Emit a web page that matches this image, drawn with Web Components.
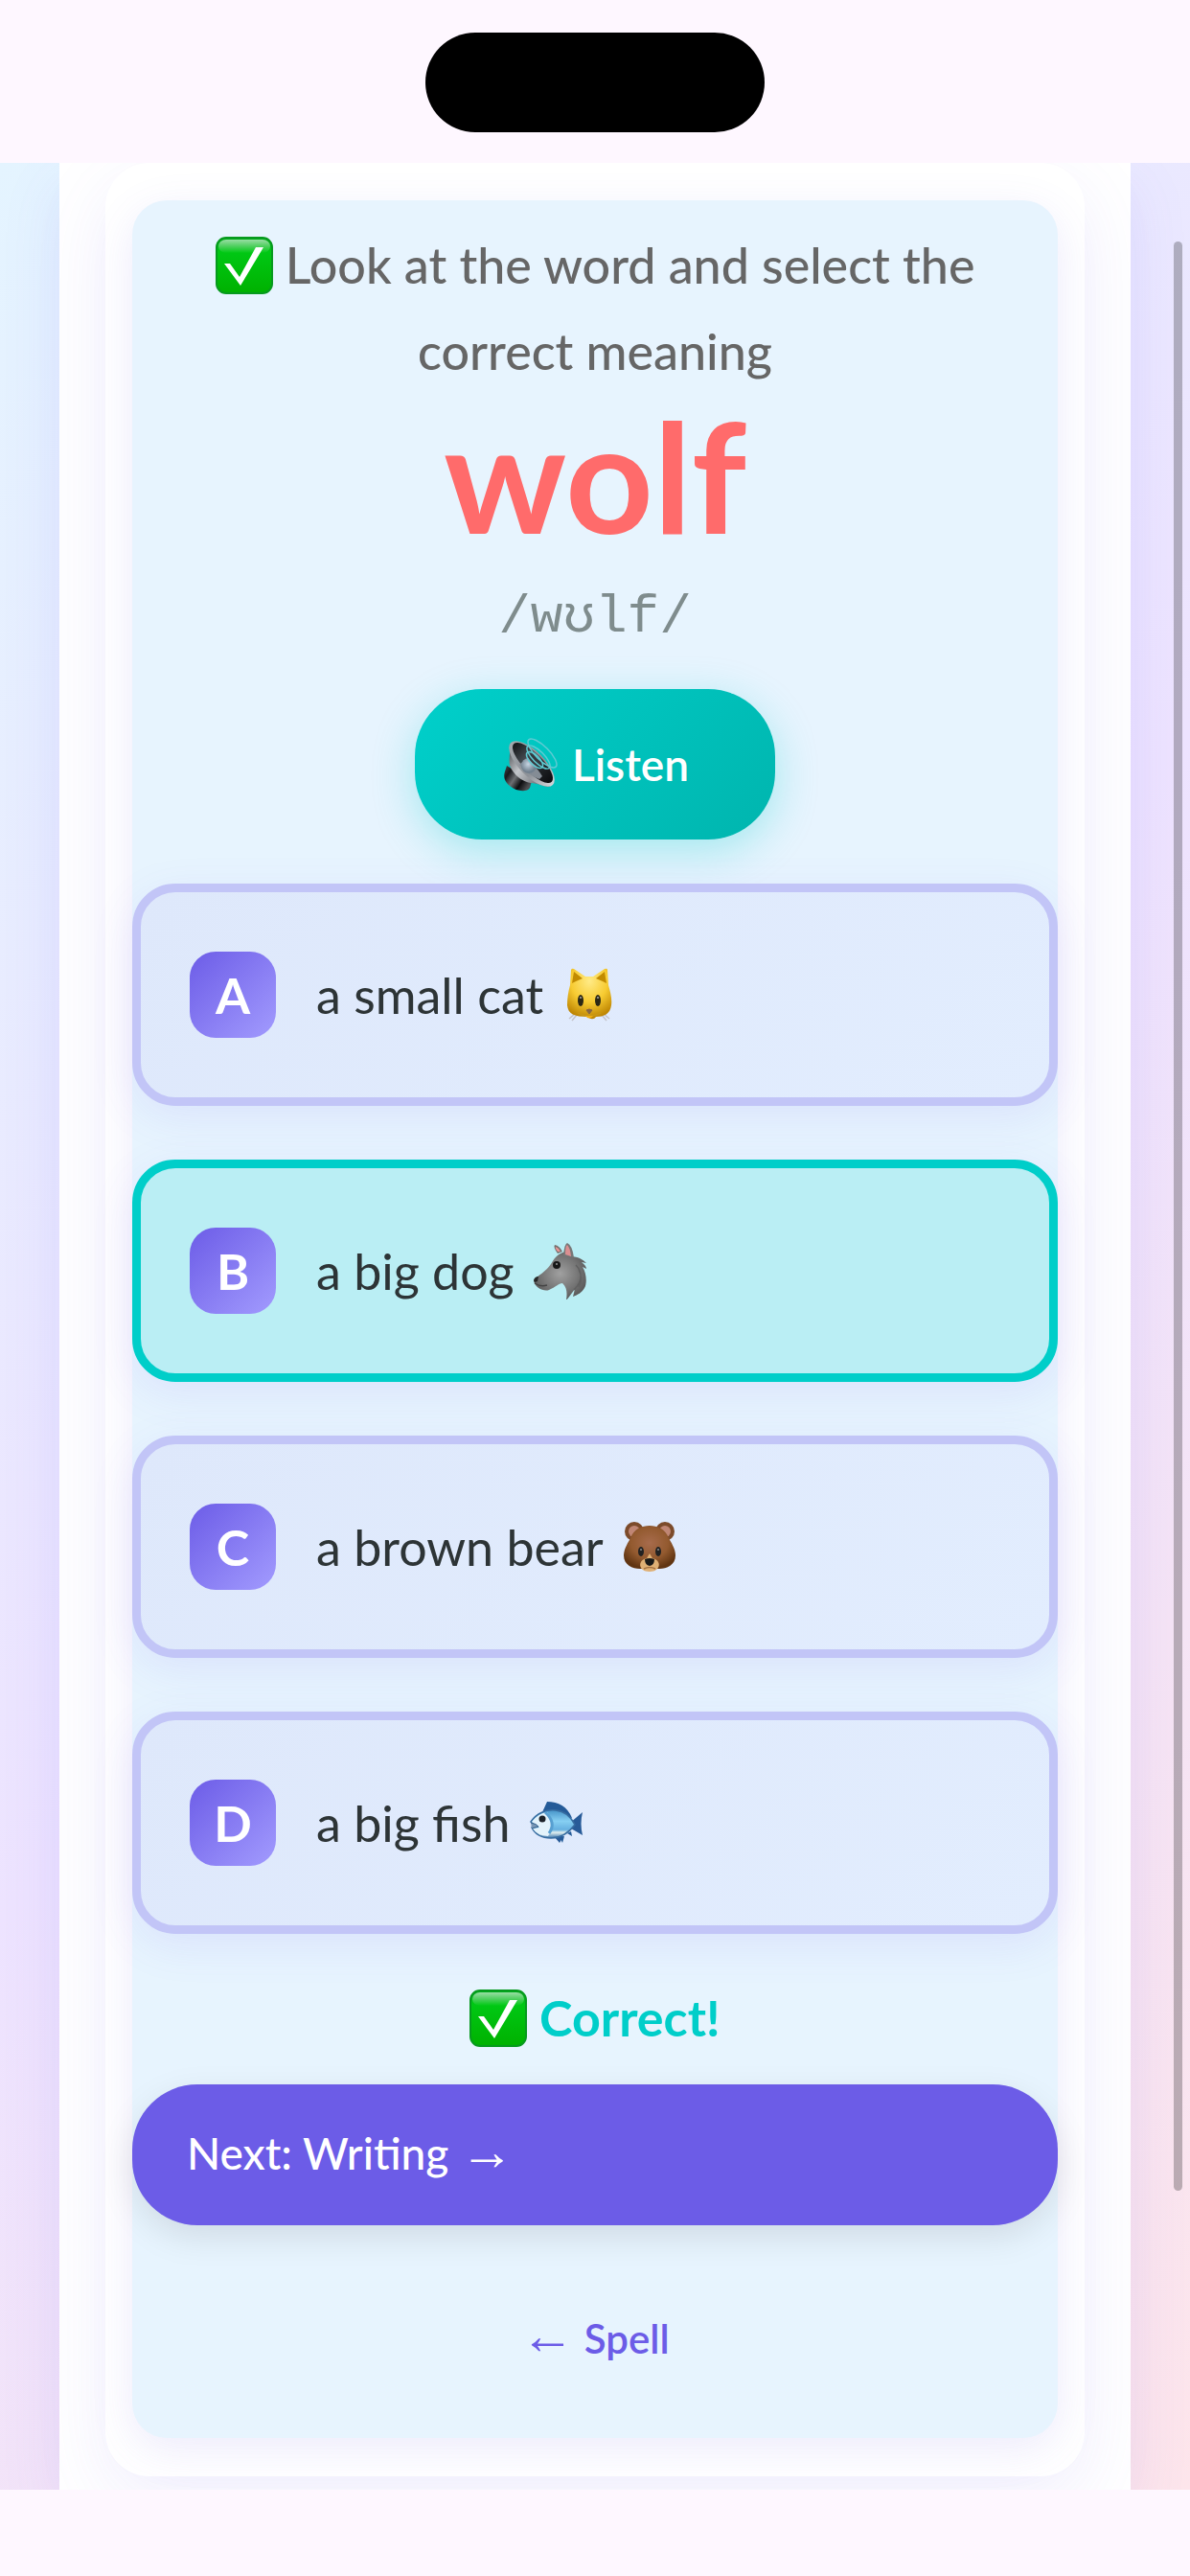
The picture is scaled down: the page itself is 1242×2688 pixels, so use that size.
<!DOCTYPE html>
<html lang="en">
<head>
<meta charset="utf-8">
<meta name="viewport" content="width=device-width, initial-scale=1">
<title>wolf</title>
<style>
  body {
    margin: 0;
    background: #fef7ff;
    font-family: Lato, "Liberation Sans", sans-serif;
    color: #2d3436;
  }

  /* long thin arrows */
  .arrow {
    font-family: "Liberation Serif", serif;
    font-size: 56px;
    font-weight: 400;
    line-height: 0;
  }
</style>
</head>
<body>
<app-screen>
  <lesson-card>
    <lesson-prompt>
      <emoji-icon slot="icon" name="check"></emoji-icon>
      Look at the word and select the correct meaning
    </lesson-prompt>
    <word-title ipa="/wʊlf/">wolf</word-title>
    <listen-button>Listen</listen-button>
    <answer-list>
      <answer-option letter="A" icon="cat">a small cat</answer-option>
      <answer-option letter="B" icon="wolf" selected>a big dog</answer-option>
      <answer-option letter="C" icon="bear">a brown bear</answer-option>
      <answer-option letter="D" icon="fish">a big fish</answer-option>
    </answer-list>
    <answer-feedback>Correct!</answer-feedback>
    <next-button>Next: Writing <span class="arrow">→</span></next-button>
    <back-link><span class="arrow">←</span> Spell</back-link>
  </lesson-card>
</app-screen>

<script>
  // Shared base: puts the markup into an open shadow root
  class BaseElement extends HTMLElement {
    constructor() {
      super();
      this.attachShadow({ mode: 'open' });
    }

    connectedCallback() {
      const template = document.createElement('template');
      template.innerHTML = this.render();
      this.shadowRoot.replaceChildren(template.content.cloneNode(true));
    }
  }

  const ICONS = {
    check: `
      <defs>
        <linearGradient id="g" x2="0" y2="1"><stop stop-color="#00a81c"/><stop offset=".25" stop-color="#00c814"/><stop offset="1" stop-color="#00b100"/></linearGradient>
        <linearGradient id="s" x2="0" y2="1"><stop stop-color="#fff" stop-opacity=".6"/><stop offset="1" stop-color="#fff" stop-opacity="0"/></linearGradient>
      </defs>
      <rect x="1" y="1" width="58" height="58" rx="10" fill="url(#g)" stroke="#079a1e" stroke-width="2"/>
      <rect x="3" y="3" width="54" height="14" rx="8" fill="url(#s)"/>
      <path d="M9 28h6l10 14L42 11h8L26 51z" fill="#fff"/>`,
    speaker: `
      <defs>
        <linearGradient id="m" x2="1" y2=".6"><stop stop-color="#4a4a4c"/><stop offset=".25" stop-color="#17191c"/><stop offset=".5" stop-color="#6d6f72"/><stop offset=".75" stop-color="#0c0d0f"/><stop offset="1" stop-color="#4d4d50"/></linearGradient>
        <linearGradient id="c" x2="1" y2=".6"><stop stop-color="#55585c"/><stop offset=".4" stop-color="#c3c6ca"/><stop offset="1" stop-color="#66696e"/></linearGradient>
        <linearGradient id="r" x2="1"><stop stop-color="#a3a8ad"/><stop offset=".6" stop-color="#8d9197"/><stop offset="1" stop-color="#d3d6da"/></linearGradient>
        <linearGradient id="k" x2="1"><stop stop-color="#131517"/><stop offset=".4" stop-color="#4d535a"/><stop offset=".65" stop-color="#23262a"/><stop offset="1" stop-color="#0b0c0e"/></linearGradient>
        <radialGradient id="d" cx=".45" cy=".4"><stop stop-color="#c6d5e3"/><stop offset="1" stop-color="#71808e"/></radialGradient>
      </defs>
      <path d="M6 31l26 16-2 7c-3 5-14 4-21-2-5-4-7-9-5-15z" fill="url(#m)"/>
      <path d="M9 16C9 24 7 29 11 35c5 8 13 13 20 14 7 0 14 4 20 4z" fill="url(#c)"/>
      <ellipse cx="32" cy="29" rx="31" ry="13" transform="rotate(45 32 29)" fill="url(#r)"/>
      <ellipse cx="0" cy="0" rx="28" ry="10" transform="translate(33 28) rotate(45)" fill="url(#k)"/>
      <path d="M19 30c4-6 14-5 24 12l-3 3c-8-3-16-8-21-15z" fill="#848c95"/>
      <circle cx="29" cy="31" r="8" fill="url(#d)"/>
      <ellipse cx="35" cy="25" rx="9" ry="4" transform="rotate(45 35 25)" fill="#34393f"/>
      <g fill="none" stroke="#5fcbd3" stroke-width="1.5">
        <ellipse cx="35" cy="25" rx="11" ry="5" transform="rotate(45 35 25)"/>
        <ellipse cx="39" cy="22" rx="16" ry="6" transform="rotate(45 39 22)"/>
        <ellipse cx="43" cy="18" rx="20" ry="7" transform="rotate(45 43 18)"/>
      </g>`,
    cat: `
      <defs>
        <radialGradient id="f" cy=".25" r=".75"><stop stop-color="#ffeb87"/><stop offset=".55" stop-color="#f7cb31"/><stop offset="1" stop-color="#bc8300"/></radialGradient>
      </defs>
      <path d="M9 55l6-5m-3 7l5-6M51 55l-6-5m3 7l-5-6" stroke="#c4c4cb" stroke-width="1.5"/>
      <path d="M10 20L11 4q1-2 3-1l12 8h8l12-8q3-1 3 1l1 16c2 7 4 14 3 21-1 9-8 12-16 12-2 3-6 3-8 0C14 53 8 50 7 41c0-7 1-14 3-21z" fill="url(#f)"/>
      <path d="M12 18l2-12 9 7-7 3zM48 18L46 6l-9 7 7 3z" fill="#c28b00"/>
      <ellipse cx="21" cy="36" rx="3" ry="6" fill="#2a2715"/><ellipse cx="39" cy="36" rx="3" ry="6" fill="#2a2715"/>
      <circle cx="21" cy="33" r="1" fill="#aaa"/><circle cx="39" cy="33" r="1" fill="#aaa"/>
      <path d="M27 46q3-2 6 0l-3 4z" fill="#866544" stroke="#866544"/>
      <path d="M18 49q9 4 12 2q4 2 12-2" fill="none" stroke="#c99715" stroke-width="1.5"/>
      <path d="M26 52h8q-4 5-8 0z" fill="#f0ad11"/>`,
    wolf: `
      <defs>
        <radialGradient id="w" cx=".5" cy=".45" r=".6"><stop stop-color="#a0a0a0"/><stop offset=".6" stop-color="#747474"/><stop offset="1" stop-color="#535353"/></radialGradient>
      </defs>
      <path d="M27 12q-5-7-3-9 5 1 8 7z" fill="#76706e"/><path d="M27 10q-3-4-2-5 3 1 5 5z" fill="#e99696"/>
      <path d="M2 40c4-5 13-9 18-17 5-9 10-12 16-13 2 1 4 2 6 5 8 1 12 4 15 7l-5-1q5 4 5 7l-4-2c4 6 5 17 2 22-3 5-7 7-12 9l2-8c-3 4-5 7-9 12 1-8 1-13-4-18-4 0-7 4-14 7-5 2-15-2-16-10z" fill="url(#w)"/>
      <path d="M33 14Q34 2 37 1q5 2 7 15z" fill="#777"/><path d="M35 13q0-9 2-10 3 3 4 12z" fill="#db8f91"/>
      <path d="M2 40q1-4 5-4l-1 5-3 1z" fill="#262626"/>
      <path d="M3 43q6 4 13 2" fill="none" stroke="#444" stroke-width="1.5"/>
      <circle cx="26" cy="24" r="4" fill="#171717"/><circle cx="26" cy="23" r="1" fill="#999"/>
      <path d="M46 24c8 8 6 18-2 26M49 29q5 9 0 18" fill="none" stroke="#606060" stroke-width="1.5"/>`,
    bear: `
      <defs>
        <radialGradient id="b" cy=".4" r=".6"><stop stop-color="#a76b4c"/><stop offset=".6" stop-color="#935a2f"/><stop offset="1" stop-color="#613512"/></radialGradient>
      </defs>
      <circle cx="14" cy="14" r="10" fill="#7c4b2b"/><circle cx="46" cy="14" r="10" fill="#7c4b2b"/>
      <circle cx="14" cy="14" r="6" fill="#c08674"/><circle cx="46" cy="14" r="6" fill="#c08674"/>
      <path d="M10 21C14 11 22 8 30 8s16 3 20 13c2 4 7 11 7 18 0 10-9 14-17 14H20C12 53 3 49 3 39c0-7 5-14 7-18z" fill="url(#b)"/>
      <path d="M30 37l3 5c10 2 9 14-3 14s-13-12-3-14z" fill="#dfb075"/>
      <ellipse cx="21" cy="35" rx="3" ry="5" fill="#222"/><ellipse cx="39" cy="35" rx="3" ry="5" fill="#222"/>
      <circle cx="21" cy="33" r="1" fill="#8c8c8c"/><circle cx="39" cy="33" r="1" fill="#8c8c8c"/>
      <path d="M25 43q5-2 10 0 0 6-5 7-5-1-5-7z" fill="#191919"/>
      <path d="M24 53q6-3 12 0" fill="none" stroke="#a77342" stroke-width="1.5"/>`,
    fish: `
      <defs>
        <linearGradient id="h" x2="0" y2="1"><stop stop-color="#4795ca"/><stop offset=".4" stop-color="#86cff2"/><stop offset=".7" stop-color="#65b0e0"/><stop offset=".8" stop-color="#e2f0ef"/><stop offset="1" stop-color="#3471aa"/></linearGradient>
      </defs>
      <path d="M16 19l5-11c12 0 21 5 26 17zM34 45l3 6 2-7zM42 41l5 3-1-5z" fill="#245b98"/>
      <path d="M28 44l6 7 4-7zM45 30l13-11q-3 12 0 24L46 36z" fill="#285b98"/>
      <path d="M4 29C10 20 20 16 30 17c10 1 16 7 20 15-6 8-14 14-25 14-8 0-16-3-20-11l6-1z" fill="url(#h)" stroke="#376da1" stroke-width="1.5"/>
      <path d="M5 29q7-9 16-10 9 11 1 25-12-1-16-8l7-1z" fill="#e3f3fb"/>
      <path d="M19 19q12 11 4 22" fill="none" stroke="#579fd1" stroke-width="3"/>
      <path d="M4 30q6 1 8 4l-7 2" fill="#7897b5" stroke="#37648f"/>
      <circle cx="16" cy="26" r="3.5" fill="#1d2329"/>`
  };

  // Picture drawn inline with the text around it
  class EmojiIcon extends BaseElement {
    render() {
      return `
        <style>
          :host {
            display: inline-block;
            width: 60px;
            height: 60px;
            vertical-align: -11px;
          }
          svg { display: block; width: 100%; height: 100%; }
        </style>
        <svg viewBox="0 0 60 60" aria-hidden="true">${ICONS[this.getAttribute('name')]}</svg>
      `;
    }
  }

  class AppScreen extends BaseElement {
    render() {
      return `
        <style>
          :host {
            display: flex;
            flex-direction: column;
            min-height: 100vh;
            position: relative;
          }
          header {
            display: flex;
            justify-content: center;
            align-items: center;
            height: 170px;
          }
          .island {
            width: 354px;
            height: 104px;
            margin-top: 2px;
            border-radius: 52px;
            background: #000;
          }
          main {
            flex: 1;
            display: flex;
            padding: 0 62px;
            overflow: hidden;
            background: linear-gradient(135deg, #e4f4ff, #ede3ff 50%, #fde5eb);
          }
          .panel {
            flex: 1;
            padding: 0 48px 14px;
            background: #fff;
            box-shadow: 0 24px 60px rgba(108, 92, 231, .1);
          }
          footer { height: 90px; }
          /* scroll thumb floats over the page */
          .thumb {
            position: absolute;
            top: 252px;
            bottom: 402px;
            right: 8px;
            width: 9px;
            border-radius: 5px;
            background: rgba(0, 0, 0, .25);
          }
        </style>
        <header><div class="island"></div></header>
        <main><div class="panel"><slot></slot></div></main>
        <footer></footer>
        <div class="thumb"></div>
      `;
    }
  }

  class LessonCard extends BaseElement {
    render() {
      return `
        <style>
          :host {
            display: block;
            padding: 39px 28px 40px;
            border-radius: 46px;
            background: #fff;
            box-shadow: 0 24px 80px rgba(108, 92, 231, .1);
          }
          section {
            display: flex;
            flex-direction: column;
            padding: 22px 0 44px;
            border-radius: 36px;
            background: #e7f4fe;
            box-shadow: 0 12px 45px rgba(108, 92, 231, .12);
          }
        </style>
        <section><slot></slot></section>
      `;
    }
  }

  class LessonPrompt extends BaseElement {
    render() {
      return `
        <style>
          :host { display: block; padding: 0 60px; }
          p {
            margin: 0;
            font-size: 52px;
            font-weight: 500;
            line-height: 90px;
            text-align: center;
            color: #666;
          }
        </style>
        <p><slot name="icon"></slot> <slot></slot></p>
      `;
    }
  }

  class WordTitle extends BaseElement {
    render() {
      return `
        <style>
          :host { display: block; text-align: center; }
          h1 {
            margin: 0;
            font-size: 160px;
            font-weight: 700;
            line-height: 168px;
            color: #ff6b6b;
          }
          p {
            margin: 20px 0 30px;
            font-family: "Liberation Mono", monospace;
            font-size: 56px;
            line-height: 90px;
            color: #7f8c8d;
          }
        </style>
        <h1><slot></slot></h1>
        <p>${this.getAttribute('ipa')}</p>
      `;
    }
  }

  class ListenButton extends BaseElement {
    render() {
      return `
        <style>
          :host { display: block; align-self: center; margin-bottom: 46px; }
          button {
            display: flex;
            align-items: center;
            gap: 14px;
            height: 157px;
            padding: 0 90px;
            border: 0;
            border-radius: 70px;
            background: linear-gradient(135deg, #00d0cb, #00b5ae);
            box-shadow: 0 12px 45px rgba(0, 206, 201, .3);
            font: 600 46px/60px Lato, "Liberation Sans", sans-serif;
            color: #fff;
          }
        </style>
        <button type="button"><emoji-icon name="speaker"></emoji-icon><span><slot></slot></span></button>
      `;
    }
  }

  class AnswerList extends BaseElement {
    render() {
      return `
        <style>
          :host {
            display: flex;
            flex-direction: column;
            gap: 56px;
          }
        </style>
        <slot></slot>
      `;
    }
  }

  class AnswerOption extends BaseElement {
    render() {
      return `
        <style>
          :host { display: block; }
          button {
            display: flex;
            align-items: center;
            gap: 42px;
            width: 100%;
            padding: 62px 51px;
            border: 9px solid #c2c5f7;
            border-radius: 45px;
            background: linear-gradient(135deg, #dee8fb, #e2edfe);
            box-shadow: 0 12px 45px rgba(108, 92, 231, .1);
            font: 400 52px/90px Lato, "Liberation Sans", sans-serif;
            color: inherit;
            text-align: left;
          }
          :host([selected]) button {
            border-color: #00cec9;
            background: #baeef4;
          }
          .letter {
            width: 90px;
            border-radius: 27px;
            background: linear-gradient(135deg, #6c5ce7, #a29bfe);
            font-weight: 700;
            text-align: center;
            color: #fff;
          }
          .answer {
            display: flex;
            align-items: center;
            gap: 18px;
          }
        </style>
        <button type="button" aria-pressed="${this.hasAttribute('selected')}">
          <span class="letter">${this.getAttribute('letter')}</span>
          <span class="answer"><span><slot></slot></span><emoji-icon name="${this.getAttribute('icon')}"></emoji-icon></span>
        </button>
      `;
    }
  }

  class AnswerFeedback extends BaseElement {
    render() {
      return `
        <style>
          :host { display: block; margin: 42px 0 25px; }
          p {
            margin: 0;
            font-size: 52px;
            font-weight: 700;
            line-height: 90px;
            text-align: center;
            color: #00cec9;
          }
        </style>
        <p role="status"><emoji-icon name="check"></emoji-icon> <slot></slot></p>
      `;
    }
  }

  class NextButton extends BaseElement {
    render() {
      return `
        <style>
          :host { display: block; }
          button {
            display: block;
            width: 100%;
            padding: 0 57px 3px;
            border: 0;
            border-radius: 68px;
            background: #6c5ce7;
            box-shadow: 0 12px 36px rgba(0, 0, 0, .1);
            font: 500 46px/144px Lato, "Liberation Sans", sans-serif;
            text-align: left;
            color: #fff;
          }
        </style>
        <button type="button"><slot></slot></button>
      `;
    }
  }

  class BackLink extends BaseElement {
    render() {
      return `
        <style>
          :host { display: block; align-self: center; margin-top: 58px; }
          a {
            display: block;
            padding: 0 30px;
            font-size: 42px;
            font-weight: 600;
            line-height: 120px;
            text-decoration: none;
            color: #6c5ce7;
          }
        </style>
        <a href="#spell"><slot></slot></a>
      `;
    }
  }

  customElements.define('emoji-icon', EmojiIcon);
  customElements.define('app-screen', AppScreen);
  customElements.define('lesson-card', LessonCard);
  customElements.define('lesson-prompt', LessonPrompt);
  customElements.define('word-title', WordTitle);
  customElements.define('listen-button', ListenButton);
  customElements.define('answer-list', AnswerList);
  customElements.define('answer-option', AnswerOption);
  customElements.define('answer-feedback', AnswerFeedback);
  customElements.define('next-button', NextButton);
  customElements.define('back-link', BackLink);
</script>
</body>
</html>
